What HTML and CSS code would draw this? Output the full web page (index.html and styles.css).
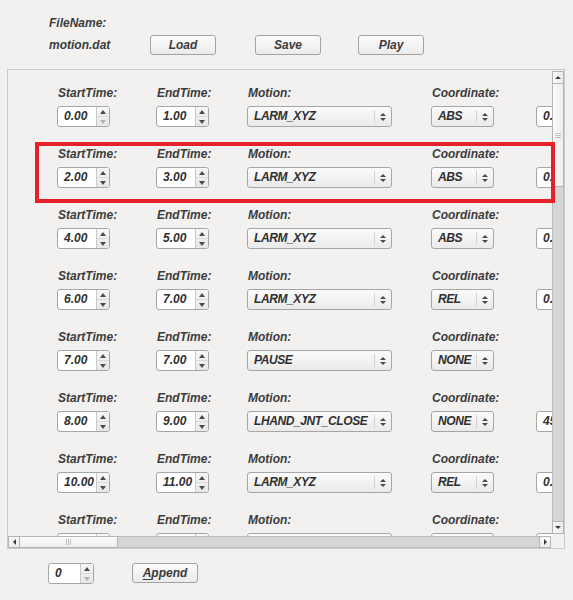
FILE: index.html
```html
<!DOCTYPE html>
<html>
<head>
<meta charset="utf-8">
<link rel="stylesheet" href="styles.css">
</head>
<body>
<div class="app">
  <div class="header">
    <div class="fname">FileName:</div>
    <div class="filebar">
      <span class="fval">motion.dat</span>
      <button class="btn">Load</button>
      <button class="btn">Save</button>
      <button class="btn">Play</button>
    </div>
  </div>

  <div class="panel">
    <div class="viewport">
      <div class="row">
        <div class="cell"><div class="lbl">StartTime:</div><div class="spin"><span class="val">0.00</span><span class="sbtns"><span class="up"></span><span class="dn off"></span></span></div></div>
        <div class="cell"><div class="lbl">EndTime:</div><div class="spin"><span class="val">1.00</span><span class="sbtns"><span class="up"></span><span class="dn"></span></span></div></div>
        <div class="cell"><div class="lbl">Motion:</div><div class="combo wide"><span class="val">LARM_XYZ</span><span class="carr"><i class="cu"></i><i class="cd"></i></span></div></div>
        <div class="cell"><div class="lbl">Coordinate:</div><div class="combo narrow"><span class="val">ABS</span><span class="carr"><i class="cu"></i><i class="cd"></i></span></div></div>
        <div class="cell"><div class="lbl"></div><div class="field"><span class="val">0.00</span></div></div>
      </div>
      <div class="row">
        <div class="cell"><div class="lbl">StartTime:</div><div class="spin"><span class="val">2.00</span><span class="sbtns"><span class="up"></span><span class="dn"></span></span></div></div>
        <div class="cell"><div class="lbl">EndTime:</div><div class="spin"><span class="val">3.00</span><span class="sbtns"><span class="up"></span><span class="dn"></span></span></div></div>
        <div class="cell"><div class="lbl">Motion:</div><div class="combo wide"><span class="val">LARM_XYZ</span><span class="carr"><i class="cu"></i><i class="cd"></i></span></div></div>
        <div class="cell"><div class="lbl">Coordinate:</div><div class="combo narrow"><span class="val">ABS</span><span class="carr"><i class="cu"></i><i class="cd"></i></span></div></div>
        <div class="cell"><div class="lbl"></div><div class="field"><span class="val">0.00</span></div></div>
      </div>
      <div class="row">
        <div class="cell"><div class="lbl">StartTime:</div><div class="spin"><span class="val">4.00</span><span class="sbtns"><span class="up"></span><span class="dn"></span></span></div></div>
        <div class="cell"><div class="lbl">EndTime:</div><div class="spin"><span class="val">5.00</span><span class="sbtns"><span class="up"></span><span class="dn"></span></span></div></div>
        <div class="cell"><div class="lbl">Motion:</div><div class="combo wide"><span class="val">LARM_XYZ</span><span class="carr"><i class="cu"></i><i class="cd"></i></span></div></div>
        <div class="cell"><div class="lbl">Coordinate:</div><div class="combo narrow"><span class="val">ABS</span><span class="carr"><i class="cu"></i><i class="cd"></i></span></div></div>
        <div class="cell"><div class="lbl"></div><div class="field"><span class="val">0.00</span></div></div>
      </div>
      <div class="row">
        <div class="cell"><div class="lbl">StartTime:</div><div class="spin"><span class="val">6.00</span><span class="sbtns"><span class="up"></span><span class="dn"></span></span></div></div>
        <div class="cell"><div class="lbl">EndTime:</div><div class="spin"><span class="val">7.00</span><span class="sbtns"><span class="up"></span><span class="dn"></span></span></div></div>
        <div class="cell"><div class="lbl">Motion:</div><div class="combo wide"><span class="val">LARM_XYZ</span><span class="carr"><i class="cu"></i><i class="cd"></i></span></div></div>
        <div class="cell"><div class="lbl">Coordinate:</div><div class="combo narrow"><span class="val">REL</span><span class="carr"><i class="cu"></i><i class="cd"></i></span></div></div>
        <div class="cell"><div class="lbl"></div><div class="field"><span class="val">0.00</span></div></div>
      </div>
      <div class="row">
        <div class="cell"><div class="lbl">StartTime:</div><div class="spin"><span class="val">7.00</span><span class="sbtns"><span class="up"></span><span class="dn"></span></span></div></div>
        <div class="cell"><div class="lbl">EndTime:</div><div class="spin"><span class="val">7.00</span><span class="sbtns"><span class="up"></span><span class="dn"></span></span></div></div>
        <div class="cell"><div class="lbl">Motion:</div><div class="combo wide"><span class="val">PAUSE</span><span class="carr"><i class="cu"></i><i class="cd"></i></span></div></div>
        <div class="cell"><div class="lbl">Coordinate:</div><div class="combo narrow"><span class="val">NONE</span><span class="carr"><i class="cu"></i><i class="cd"></i></span></div></div>
        <div class="cell"></div>
      </div>
      <div class="row">
        <div class="cell"><div class="lbl">StartTime:</div><div class="spin"><span class="val">8.00</span><span class="sbtns"><span class="up"></span><span class="dn"></span></span></div></div>
        <div class="cell"><div class="lbl">EndTime:</div><div class="spin"><span class="val">9.00</span><span class="sbtns"><span class="up"></span><span class="dn"></span></span></div></div>
        <div class="cell"><div class="lbl">Motion:</div><div class="combo wide"><span class="val">LHAND_JNT_CLOSE</span><span class="carr"><i class="cu"></i><i class="cd"></i></span></div></div>
        <div class="cell"><div class="lbl">Coordinate:</div><div class="combo narrow"><span class="val">NONE</span><span class="carr"><i class="cu"></i><i class="cd"></i></span></div></div>
        <div class="cell"><div class="lbl"></div><div class="field"><span class="val">45.0</span></div></div>
      </div>
      <div class="row">
        <div class="cell"><div class="lbl">StartTime:</div><div class="spin"><span class="val">10.00</span><span class="sbtns"><span class="up"></span><span class="dn"></span></span></div></div>
        <div class="cell"><div class="lbl">EndTime:</div><div class="spin"><span class="val">11.00</span><span class="sbtns"><span class="up"></span><span class="dn"></span></span></div></div>
        <div class="cell"><div class="lbl">Motion:</div><div class="combo wide"><span class="val">LARM_XYZ</span><span class="carr"><i class="cu"></i><i class="cd"></i></span></div></div>
        <div class="cell"><div class="lbl">Coordinate:</div><div class="combo narrow"><span class="val">REL</span><span class="carr"><i class="cu"></i><i class="cd"></i></span></div></div>
        <div class="cell"><div class="lbl"></div><div class="field"><span class="val">0.00</span></div></div>
      </div>
      <div class="row">
        <div class="cell"><div class="lbl">StartTime:</div><div class="spin"><span class="val">12.00</span><span class="sbtns"><span class="up"></span><span class="dn"></span></span></div></div>
        <div class="cell"><div class="lbl">EndTime:</div><div class="spin"><span class="val">13.00</span><span class="sbtns"><span class="up"></span><span class="dn"></span></span></div></div>
        <div class="cell"><div class="lbl">Motion:</div><div class="combo wide"><span class="val">LARM_XYZ</span><span class="carr"><i class="cu"></i><i class="cd"></i></span></div></div>
        <div class="cell"><div class="lbl">Coordinate:</div><div class="combo narrow"><span class="val">REL</span><span class="carr"><i class="cu"></i><i class="cd"></i></span></div></div>
        <div class="cell"><div class="lbl"></div><div class="field"><span class="val">0.00</span></div></div>
      </div>
    </div>
    <div class="vscroll">
      <div class="vbtn"><span class="tri-up"></span></div>
      <div class="vthumb"><span class="hgrip"></span><span class="hgrip"></span><span class="hgrip"></span></div>
      <div class="vtrack"></div>
      <div class="vbtn"><span class="tri-dn"></span></div>
    </div>
    <div class="hscroll">
      <div class="hbtn"><span class="tri-l"></span></div>
      <div class="hthumb"><span class="vgrip"></span><span class="vgrip"></span><span class="vgrip"></span></div>
      <div class="htrack"></div>
      <div class="hbtn"><span class="tri-r"></span></div>
    </div>
    <div class="corner"></div>
  </div>

  <div class="footer">
    <div class="spin small"><span class="val">0</span><span class="sbtns"><span class="up"></span><span class="dn off"></span></span></div>
    <button class="btn"><u>A</u>ppend</button>
  </div>

  <div class="highlight"></div>
</div>
</body>
</html>
```

FILE: styles.css
```css
* { box-sizing: border-box; }
html, body { margin: 0; padding: 0; }
body {
  background: #f2f1f0;
  font-family: "Liberation Sans", Arial, sans-serif;
  font-size: 12px;
  font-weight: bold;
  font-style: italic;
  color: #3c3c3c;
}
.app {
  position: relative;
  width: 573px;
  height: 600px;
  overflow: hidden;
}
.header {
  padding: 16px 0 0 49px;
}
.fname {
  height: 14px;
  line-height: 14px;
}
.filebar {
  margin-top: 5px;
  height: 20px;
  display: grid;
  grid-template-columns: 101px 105px 103px 66px;
  align-items: center;
}
.fval { line-height: 14px; }
.btn {
  width: 66px;
  height: 20px;
  padding: 0;
  border: 1px solid #a3a3a3;
  border-radius: 3px;
  background: linear-gradient(#fbfbfb, #ebebeb);
  font: inherit;
  color: #3c3c3c;
  line-height: 17px;
  text-align: center;
}
.btn u { text-decoration-thickness: 1px; text-underline-offset: 2px; }

/* panel */
.panel {
  margin: 14px 0 0 7px;
  width: 558px;
  height: 480px;
  border: 1px solid #cbcbcb;
  display: grid;
  grid-template-columns: 544px 12px;
  grid-template-rows: 466px 12px;
}
.viewport {
  overflow: hidden;
  padding-top: 16px;
}
.row {
  height: 61px;
  padding-left: 49px;
  display: grid;
  grid-template-columns: 99px 91px 184px 105px 60px;
  width: 600px;
}
.cell {
  display: flex;
  flex-direction: column;
  gap: 6px;
}
.lbl {
  height: 14px;
  line-height: 15px;
  padding-left: 1px;
  white-space: nowrap;
}
.val {
  color: #303030;
  white-space: nowrap;
}

/* spin box */
.spin {
  width: 53px;
  height: 21px;
  border: 1px solid #a6a6a6;
  border-radius: 3px;
  background: #fff;
  display: flex;
  overflow: hidden;
}
.spin .val {
  flex: 1;
  padding-left: 6px;
  line-height: 19px;
}
.sbtns {
  width: 13px;
  border-left: 1px solid #c9c9c9;
  background: linear-gradient(#f7f7f7, #e7e7e7);
  display: flex;
  flex-direction: column;
}
.sbtns .up, .sbtns .dn {
  flex: 1;
  display: flex;
  align-items: center;
  justify-content: center;
}
.sbtns .up { border-bottom: 1px solid #dadada; }
.sbtns .up::after {
  content: "";
  border-left: 3px solid transparent;
  border-right: 3px solid transparent;
  border-bottom: 4px solid #4a4a4a;
}
.sbtns .dn::after {
  content: "";
  border-left: 3px solid transparent;
  border-right: 3px solid transparent;
  border-top: 4px solid #4a4a4a;
}
.sbtns .dn.off::after { border-top-color: #b3b3b3; }
.spin.small { width: 46px; }

/* combo */
.combo {
  height: 21px;
  border: 1px solid #a6a6a6;
  border-radius: 3px;
  background: linear-gradient(#fbfbfb, #eaeaea);
  display: flex;
  align-items: center;
}
.combo.wide { width: 145px; }
.combo.narrow { width: 63px; }
.combo .val {
  flex: 1;
  padding-left: 6px;
  line-height: 19px;
  letter-spacing: -0.4px;
  overflow: hidden;
}
.carr {
  width: 17px;
  height: 13px;
  border-left: 1px solid #d2d2d2;
  display: flex;
  flex-direction: column;
  align-items: center;
  justify-content: center;
  gap: 2px;
}
.carr i {
  display: block;
  width: 0;
  height: 0;
  border-left: 3px solid transparent;
  border-right: 3px solid transparent;
}
.carr .cu { border-bottom: 3px solid #4a4a4a; }
.carr .cd { border-top: 3px solid #4a4a4a; }

/* plain field */
.field {
  width: 60px;
  height: 21px;
  border: 1px solid #a6a6a6;
  border-radius: 3px;
  background: #fff;
}
.field .val {
  display: block;
  padding-left: 6px;
  line-height: 19px;
}

/* scrollbars */
.vscroll {
  padding: 1px 0 2px 0;
  display: flex;
  flex-direction: column;
}
.vbtn {
  height: 13px;
  border: 1px solid #b4b4b4;
  background: linear-gradient(90deg, #fafafa, #ececec);
  display: flex;
  align-items: center;
  justify-content: center;
}
.vthumb {
  height: 103px;
  border: 1px solid #b4b4b4;
  border-top: none;
  background: linear-gradient(90deg, #fbfbfb, #ededed);
  display: flex;
  flex-direction: column;
  align-items: center;
  justify-content: center;
  gap: 1px;
}
.hgrip { width: 6px; height: 1px; background: #c2c2c2; }
.vtrack {
  flex: 1;
  background: #d6d6d6;
  border-left: 1px solid #bdbdbd;
  border-right: 1px solid #bdbdbd;
}
.tri-up {
  border-left: 3px solid transparent;
  border-right: 3px solid transparent;
  border-bottom: 3px solid #3c3c3c;
}
.tri-dn {
  border-left: 3px solid transparent;
  border-right: 3px solid transparent;
  border-top: 3px solid #3c3c3c;
}
.hscroll {
  width: 543px;
  display: flex;
}
.hbtn {
  width: 12px;
  border: 1px solid #b4b4b4;
  background: linear-gradient(#fafafa, #ececec);
  display: flex;
  align-items: center;
  justify-content: center;
}
.hthumb {
  width: 98px;
  border: 1px solid #b4b4b4;
  border-left: none;
  background: linear-gradient(#fbfbfb, #ededed);
  display: flex;
  align-items: center;
  justify-content: center;
  gap: 1px;
}
.vgrip { width: 1px; height: 6px; background: #c2c2c2; }
.htrack {
  flex: 1;
  background: #d6d6d6;
  border-top: 1px solid #bdbdbd;
  border-bottom: 1px solid #bdbdbd;
}
.tri-l {
  border-top: 3px solid transparent;
  border-bottom: 3px solid transparent;
  border-right: 3px solid #3c3c3c;
}
.tri-r {
  border-top: 3px solid transparent;
  border-bottom: 3px solid transparent;
  border-left: 3px solid #3c3c3c;
}

/* footer */
.footer {
  margin-top: 14px;
  padding-left: 48px;
  display: flex;
  gap: 38px;
}

/* annotation */
.highlight {
  position: absolute;
  left: 35px;
  top: 142px;
  width: 520px;
  height: 61px;
  border: 4px solid #e5202b;
}
```
